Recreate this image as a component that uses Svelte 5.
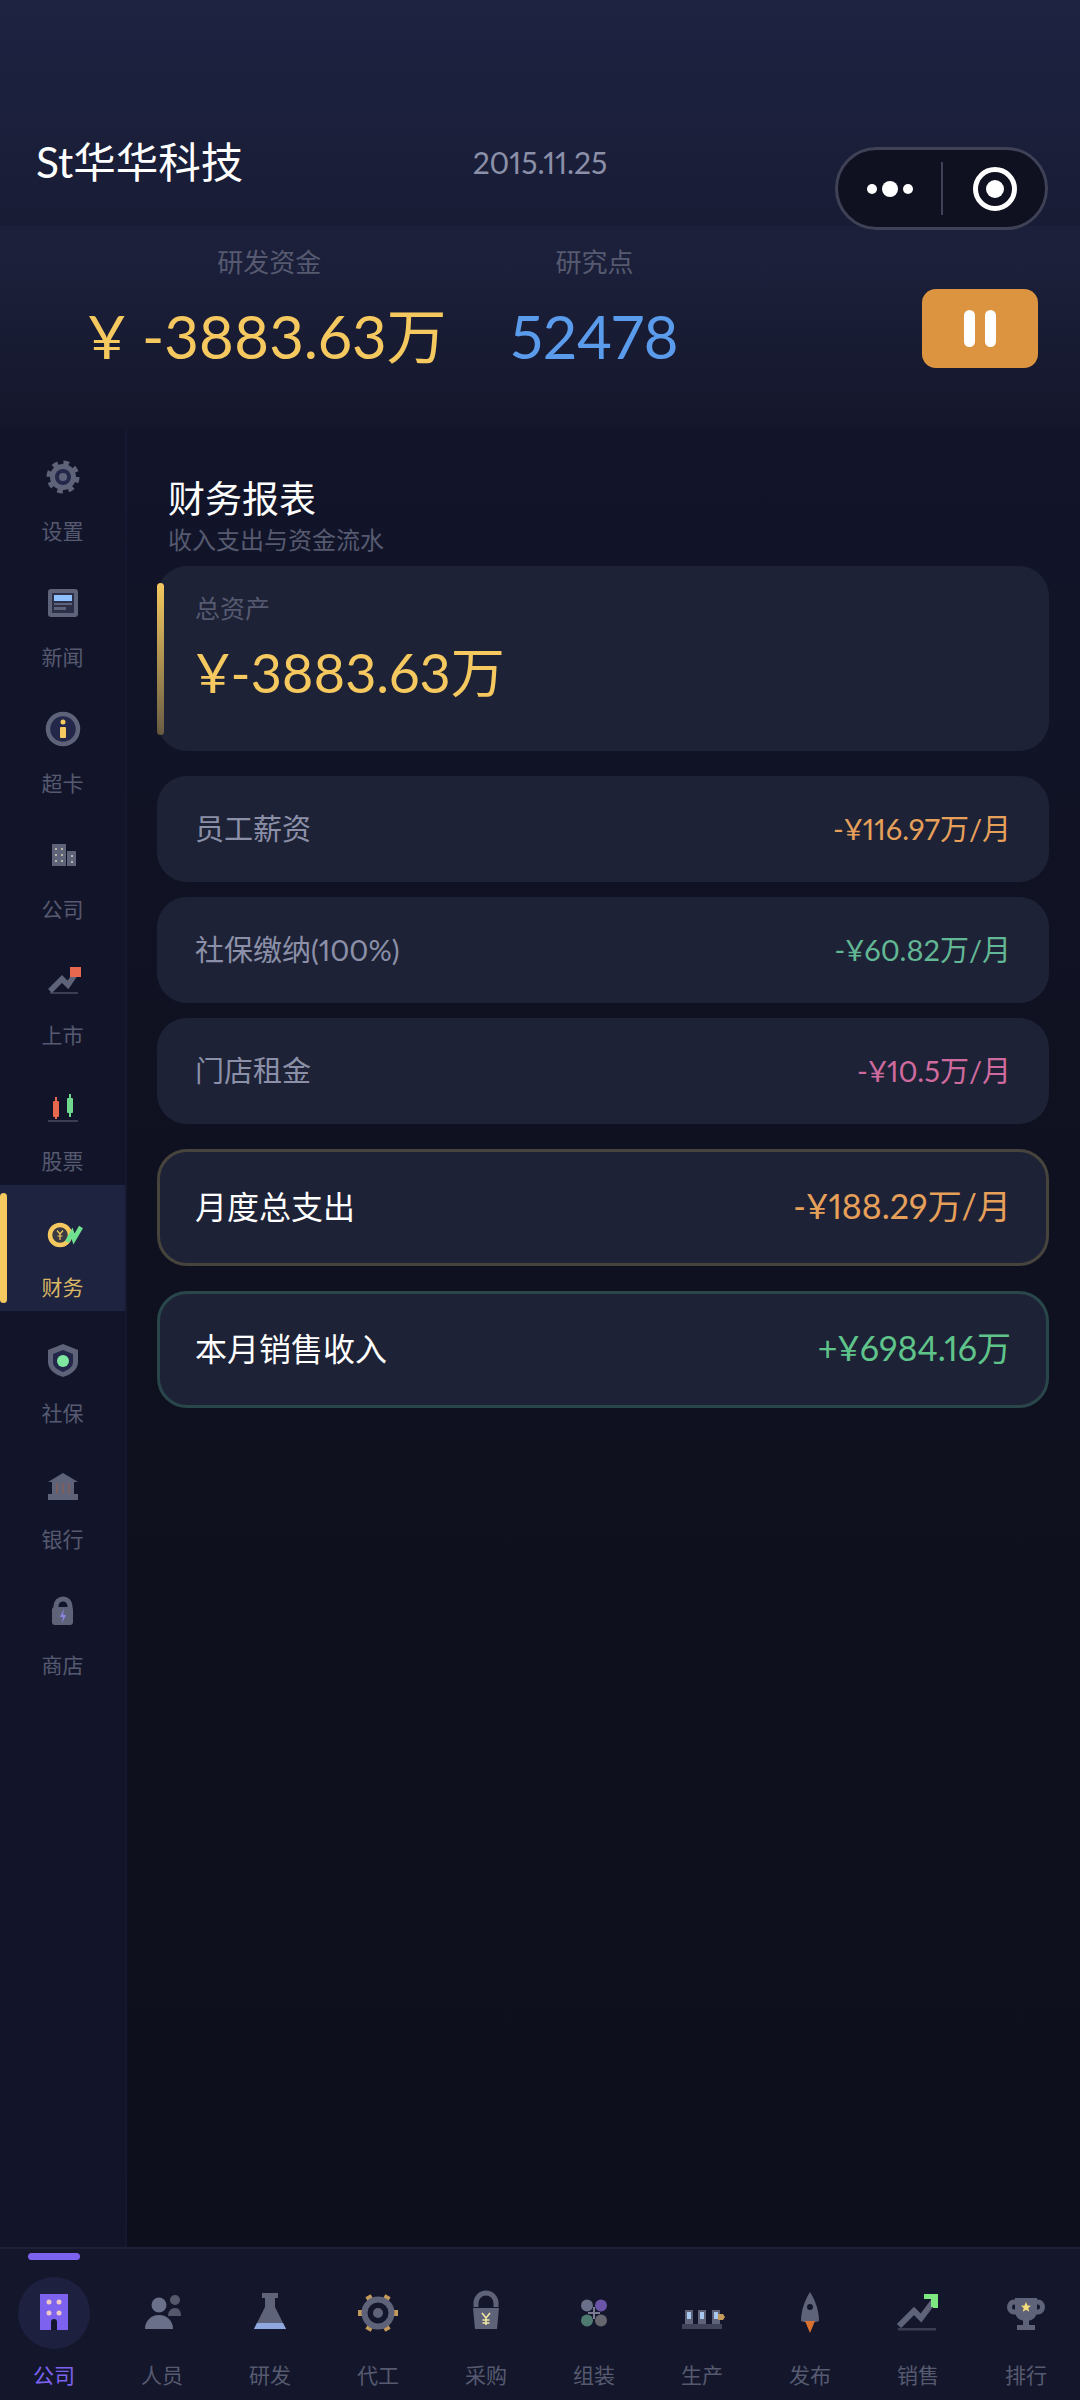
<script>
  const grey = '#5f6379'

  // icons drawn on a 48 box (sidebar) and a 60 box (bottom tabs)
  const sideIcons = {
    gear: `<circle cx="24" cy="24" r="14" fill="none" stroke="${grey}" stroke-width="5" stroke-dasharray="5.5 5.5"/><circle cx="24" cy="24" r="13" fill="${grey}"/><circle cx="24" cy="24" r="8" fill="#23274a"/><circle cx="24" cy="24" r="4" fill="${grey}"/>`,
    news: `<rect x="9" y="10" width="30" height="28" rx="3" fill="${grey}"/><rect x="13" y="14" width="22" height="20" fill="#2b3048"/><rect x="15" y="16" width="18" height="6" fill="#8fc0ff"/><rect x="15" y="24" width="18" height="2" fill="${grey}"/><rect x="15" y="28" width="12" height="3" fill="${grey}"/>`,
    info: `<circle cx="24" cy="24" r="15" fill="#23274a" stroke="${grey}" stroke-width="4.5"/><circle cx="24" cy="17" r="2.5" fill="#f5c95f"/><rect x="21" y="22" width="6" height="11" rx="1" fill="#f5c95f"/>`,
    building: `<rect x="13" y="13" width="14" height="22" fill="${grey}"/><rect x="28" y="20" width="9" height="15" fill="${grey}"/><g fill="#b5b5a8"><rect x="16" y="17" width="2" height="2"/><rect x="22" y="17" width="2" height="2"/><rect x="16" y="23" width="2" height="2"/><rect x="22" y="23" width="2" height="2"/><rect x="16" y="29" width="2" height="2"/><rect x="22" y="29" width="2" height="2"/><rect x="32" y="24" width="2" height="2"/><rect x="32" y="30" width="2" height="2"/></g>`,
    listing: `<rect x="11" y="35" width="28" height="2" fill="#3a3e55"/><path d="M11 34 23 22l6 6 8-12" fill="none" stroke="${grey}" stroke-width="5.5"/><rect x="31" y="10" width="11" height="10" fill="#e8674f"/>`,
    stock: `<rect x="9" y="37" width="30" height="2" fill="#3a3e55"/><rect x="16" y="14" width="2" height="22" fill="#e8674f"/><rect x="14" y="18" width="6" height="16" rx="1" fill="#e8674f"/><rect x="30" y="11" width="2" height="23" fill="#6fd88c"/><rect x="28" y="15" width="6" height="15" rx="1" fill="#6fd88c"/>`,
    finance: `<circle cx="21" cy="26" r="10" fill="#3a3a44" stroke="#f5c95f" stroke-width="4.5"/><path d="M18 21.500l3 3.500 3-3.500M21 25v6M18.500 27h5" fill="none" stroke="#f5c95f" stroke-width="1.200"/><path d="M28 33l5-9 2 6 7-12" fill="none" stroke="#6fe08f" stroke-width="4.500"/>`,
    shield: `<path d="M24 9 39 15v12c0 8-8 13-15 15-7-2-15-7-15-15V15z" fill="${grey}"/><path d="M24 15 34 19v8c0 5-5 8-10 10-5-2-10-5-10-10v-8z" fill="#23274a"/><circle cx="24" cy="26" r="6" fill="#7fe8a0"/>`,
    bank: `<path d="M24 12 39 21H9z" fill="${grey}"/><rect x="13" y="21" width="22" height="13" fill="${grey}"/><rect x="17" y="22" width="2" height="12" fill="#7a5f60"/><rect x="23" y="22" width="2" height="12" fill="#7a5f60"/><rect x="29" y="22" width="2" height="12" fill="#7a5f60"/><rect x="9" y="33" width="30" height="6" fill="${grey}"/>`,
    lock: `<path d="M17 22v-3a7 7 0 0 1 14 0v3" fill="none" stroke="${grey}" stroke-width="5"/><rect x="13" y="20" width="21" height="18" rx="3" fill="${grey}"/><path d="M25 22l-4 8h3l-1 6 4-8h-3z" fill="#8d86e8"/>`
  }

  const tabIcons = {
    company: `<rect x="16" y="11" width="28" height="36" fill="#7d62f0"/><g fill="#f0c8c8"><circle cx="25" cy="19" r="2.500"/><circle cx="35" cy="19" r="2.500"/><circle cx="25" cy="30" r="2.500"/><circle cx="35" cy="30" r="2.500"/></g><path d="M27 47v-8a3 3 0 0 1 6 0v8z" fill="#14162b"/>`,
    people: `<circle cx="43" cy="17" r="5" fill="#55576a"/><path d="M36 33c0-5 3-8 7-8s6 3 6 8z" fill="#55576a"/><circle cx="27" cy="22" r="7.500" fill="#6a6f8a"/><path d="M13 46c0-8 6-14 14-14s14 6 14 14z" fill="#6a6f8a"/>`,
    lab: `<rect x="22" y="10" width="16" height="5" fill="${grey}"/><path d="M25 15h10v9l11 22H14l11-22z" fill="${grey}"/><path d="M17 40h26l3 6H14z" fill="#8fa8e0"/>`,
    factory: `<g fill="#c49a5a"><rect x="27" y="10" width="6" height="7" transform="rotate(30 30 30)"/><rect x="27" y="10" width="6" height="7" transform="rotate(90 30 30)"/><rect x="27" y="10" width="6" height="7" transform="rotate(150 30 30)"/><rect x="27" y="10" width="6" height="7" transform="rotate(210 30 30)"/><rect x="27" y="10" width="6" height="7" transform="rotate(270 30 30)"/><rect x="27" y="10" width="6" height="7" transform="rotate(330 30 30)"/></g><circle cx="30" cy="30" r="13.500" fill="#14162b" stroke="${grey}" stroke-width="6"/><circle cx="30" cy="30" r="5" fill="${grey}"/>`,
    purchase: `<path d="M20 24v-4a10 10 0 0 1 20 0v4" fill="none" stroke="${grey}" stroke-width="5"/><path d="M17 25h26l-2 21H19z" fill="${grey}"/><path d="M26 30l4 5 4-5M30 35v7M26.500 37h7M26.500 40h7" fill="none" stroke="#f0e6a0" stroke-width="1.600"/>`,
    assemble: `<path d="M30 24v12M24 30h12" stroke="#7a7a90" stroke-width="2"/><circle cx="23" cy="22.500" r="6" fill="#6a6f8a"/><circle cx="37" cy="22.500" r="6" fill="#6a55a8"/><circle cx="23" cy="37.500" r="6" fill="#4f7a70"/><circle cx="37" cy="37.500" r="6" fill="#66666e"/>`,
    produce: `<rect x="10" y="41" width="40" height="5" fill="#3f4258"/><g fill="${grey}"><rect x="13" y="27" width="8" height="14"/><rect x="26" y="27" width="8" height="14"/><rect x="40" y="27" width="8" height="14"/></g><g fill="#a9c8f0"><rect x="15" y="29" width="4" height="7"/><rect x="28" y="29" width="4" height="7"/><rect x="42" y="29" width="4" height="7"/></g><path d="M46 31h5l2 3-2 3h-5z" fill="#c49a5a"/>`,
    launch: `<path d="M30 9c5 8 9 18 9 29l-3 1H24l-3-1c0-11 4-21 9-29z" fill="${grey}"/><circle cx="30" cy="24" r="3" fill="#14162b"/><path d="M25 38h10l-5 12z" fill="#d87030"/>`,
    sales: `<rect x="10" y="45" width="38" height="2.500" fill="#3a3e55"/><path d="M11 43 26 28l7 7 12-16" fill="none" stroke="${grey}" stroke-width="6"/><path d="M36 11h14v14h-5v-9h-9z" fill="#7de87f"/><rect x="43" y="13" width="6" height="11" fill="#7de87f"/>`,
    rank: `<path d="M20 19h-2a4.500 5 0 0 0 0 10h2M40 19h2a4.500 5 0 0 1 0 10h-2" fill="none" stroke="${grey}" stroke-width="5"/><path d="M19 15h22v12c0 7-4 11-11 11s-11-4-11-11z" fill="${grey}"/><rect x="27" y="36" width="6" height="8" fill="${grey}"/><rect x="21" y="42" width="18" height="5" fill="${grey}"/><path d="M30 19l1.500 3.500 3.500.3-2.700 2.300.9 3.600-3.200-1.900-3.200 1.900.9-3.600-2.700-2.300 3.500-.3z" fill="#f5dc7a"/>`
  }

  const sideItems = [
    { label: '设置', icon: 'gear' },
    { label: '新闻', icon: 'news' },
    { label: '超卡', icon: 'info' },
    { label: '公司', icon: 'building' },
    { label: '上市', icon: 'listing' },
    { label: '股票', icon: 'stock' },
    { label: '财务', icon: 'finance', active: true },
    { label: '社保', icon: 'shield' },
    { label: '银行', icon: 'bank' },
    { label: '商店', icon: 'lock' }
  ]

  const tabs = [
    { label: '公司', icon: 'company', active: true },
    { label: '人员', icon: 'people' },
    { label: '研发', icon: 'lab' },
    { label: '代工', icon: 'factory' },
    { label: '采购', icon: 'purchase' },
    { label: '组装', icon: 'assemble' },
    { label: '生产', icon: 'produce' },
    { label: '发布', icon: 'launch' },
    { label: '销售', icon: 'sales' },
    { label: '排行', icon: 'rank' }
  ]

  const rows = [
    { name: '员工薪资', value: '-¥116.97万/月', color: '#e6a05a' },
    { name: '社保缴纳(100%)', value: '-¥60.82万/月', color: '#62b795' },
    { name: '门店租金', value: '-¥10.5万/月', color: '#cf6a9f' }
  ]
</script>

<div class="page">
  <header class="header">
    <div class="top">
      <div class="title">St华华科技</div>
      <div class="date">2015.11.25</div>
      <div></div>
    </div>
    <div class="stats">
      <div class="stat">
        <div class="stat-label">研发资金</div>
        <div class="stat-value gold">¥ -3883.63万</div>
      </div>
      <div class="stat">
        <div class="stat-label">研究点</div>
        <div class="stat-value blue">52478</div>
      </div>
      <div class="pause"><span></span><span></span></div>
    </div>
    <div class="capsule">
      <div class="dots"><i></i><i class="mid"></i><i></i></div>
      <div class="sep"></div>
      <div class="ring"><i></i></div>
    </div>
  </header>

  <div class="body">
    <nav class="side">
      {#each sideItems as item}
        <div class="side-item" class:active={item.active}>
          <svg width="48" height="48" viewBox="0 0 48 48">{@html sideIcons[item.icon]}</svg>
          <div class="side-label">{item.label}</div>
        </div>
      {/each}
    </nav>

    <main class="main">
      <div class="heading">财务报表</div>
      <div class="sub">收入支出与资金流水</div>

      <div class="card total">
        <div class="total-label">总资产</div>
        <div class="total-value">¥-3883.63万</div>
      </div>

      <div class="list">
        {#each rows as r}
          <div class="card row">
            <span class="row-name">{r.name}</span>
            <span class="row-value" style="color: {r.color}">{r.value}</span>
          </div>
        {/each}
      </div>

      <div class="card row big expense">
        <span>月度总支出</span>
        <span class="big-value orange">-¥188.29万/月</span>
      </div>
      <div class="card row big income">
        <span>本月销售收入</span>
        <span class="big-value green">+¥6984.16万</span>
      </div>
    </main>
  </div>

  <footer class="tabs">
    {#each tabs as t}
      <div class="tab" class:active={t.active}>
        <div class="tab-icon">
          <svg width="60" height="60" viewBox="0 0 60 60">{@html tabIcons[t.icon]}</svg>
        </div>
        <div class="tab-label">{t.label}</div>
      </div>
    {/each}
  </footer>
</div>

<style>
  :global(body) {
    margin: 0;
    background: #0f1120;
  }

  .page {
    width: 1080px;
    height: 2400px;
    display: flex;
    flex-direction: column;
    position: relative;
    overflow: hidden;
    font-family: Lato, "Noto Sans CJK SC", sans-serif;
    font-variant-numeric: proportional-nums;
    background: #0f1120;
  }

  .header {
    height: 429px;
    flex: none;
    position: relative;
    background: linear-gradient(180deg, #1c203b 226px, #1b1f39 270px, #14172b 100%);
  }

  .top {
    height: 226px;
    box-sizing: border-box;
    padding: 136px 36px 0;
    display: grid;
    grid-template-columns: 1fr auto 1fr;
    background: linear-gradient(180deg, #1e2342 0%, #181c35 100%);
  }

  .title {
    font-size: 42.5px;
    line-height: 52px;
    color: #fff;
  }

  .date {
    font-size: 30px;
    line-height: 52px;
    color: #8b90a8;
  }

  .stats {
    display: flex;
    padding: 18px 42px 0 87px;
    gap: 64px;
    align-items: flex-start;
  }

  .stat {
    text-align: center;
  }

  .stat:first-child .stat-label {
    padding-left: 5px;
  }

  .stat-label {
    font-size: 26px;
    line-height: 36px;
    color: #565a70;
  }

  .stat-value {
    font-size: 60px;
    line-height: 76px;
    margin-top: 18px;
    white-space: nowrap;
  }

  .gold {
    color: #f5c95f;
  }

  .blue {
    color: #5b9bec;
  }

  .pause {
    margin: 45px 0 0 auto;
    width: 116px;
    height: 79px;
    border-radius: 14px;
    background: #dd9440;
    display: flex;
    justify-content: center;
    align-items: center;
    gap: 10px;
  }

  .pause span {
    width: 11px;
    height: 37px;
    border-radius: 6px;
    background: #fff;
  }

  .capsule {
    position: absolute;
    left: 835px;
    top: 147px;
    width: 213px;
    height: 83px;
    box-sizing: border-box;
    border: 3px solid #3f4256;
    border-radius: 42px;
    background: #0f1120;
    display: flex;
    align-items: center;
  }

  .dots {
    width: 103px;
    display: flex;
    justify-content: center;
    align-items: center;
    gap: 5px;
  }

  .dots i {
    width: 10px;
    height: 10px;
    border-radius: 50%;
    background: #fff;
  }

  .dots i.mid {
    width: 16px;
    height: 16px;
  }

  .sep {
    width: 2px;
    height: 53px;
    background: #3f4256;
  }

  .ring {
    width: 44px;
    height: 44px;
    margin-left: 30px;
    box-sizing: border-box;
    border: 5px solid #fff;
    border-radius: 50%;
    display: flex;
    align-items: center;
    justify-content: center;
  }

  .ring i {
    width: 18px;
    height: 18px;
    border-radius: 50%;
    background: #fff;
  }

  .body {
    flex: 1;
    display: flex;
    min-height: 0;
  }

  .side {
    width: 127px;
    flex: none;
    box-sizing: border-box;
    background: #12152a;
    border-right: 2px solid #151830;
  }

  .side-item {
    height: 126px;
    box-sizing: border-box;
    padding-top: 24px;
    position: relative;
    display: flex;
    flex-direction: column;
    align-items: center;
  }

  .side-item.active {
    background: #1e2340;
  }

  .side-item.active::before {
    content: "";
    position: absolute;
    left: 0;
    top: 8px;
    width: 7px;
    height: 110px;
    border-radius: 4px;
    background: #f5c95f;
  }

  .side-label {
    margin-top: 15px;
    font-size: 21px;
    line-height: 30px;
    color: #565a70;
  }

  .active .side-label {
    color: #d9b765;
  }

  .main {
    flex: 1;
    min-width: 0;
    padding: 46px 31px 0 30px;
    background: linear-gradient(180deg, #12152a 0%, #0f1120 40%, #0d0f1c 100%);
  }

  .heading {
    margin-left: 11px;
    font-size: 37px;
    line-height: 48px;
    color: #fff;
  }

  .sub {
    margin-left: 11px;
    font-size: 24px;
    line-height: 34px;
    color: #565a70;
  }

  .card {
    background: #1e2236;
    border-radius: 30px;
    box-sizing: border-box;
  }

  .total {
    height: 185px;
    margin-top: 9px;
    padding: 24px 38px 0;
    position: relative;
  }

  .total::before {
    content: "";
    position: absolute;
    left: 0;
    top: 17px;
    width: 7px;
    height: 152px;
    border-radius: 4px;
    background: linear-gradient(180deg, #f5c95f, rgba(245, 201, 95, 0.35));
  }

  .total-label {
    font-size: 25px;
    line-height: 36px;
    color: #565a70;
  }

  .total-value {
    margin-top: 12px;
    font-size: 54px;
    line-height: 70px;
    color: #f5c95f;
  }

  .list {
    margin-top: 25px;
    display: flex;
    flex-direction: column;
    gap: 15px;
  }

  .row {
    height: 106px;
    padding: 0 38px 4px;
    display: flex;
    align-items: center;
    justify-content: space-between;
  }

  .row-name {
    font-size: 29px;
    color: #8b90a8;
  }

  .row-value {
    font-size: 29px;
  }

  .big {
    height: 117px;
    margin-top: 25px;
    font-size: 32px;
    color: #fff;
    border: 3px solid;
    padding: 0 35px 6px;
  }

  .expense {
    border-color: #47433d;
  }

  .income {
    border-color: #29474a;
  }

  .big-value {
    font-size: 34px;
  }

  .orange {
    color: #e6a05a;
  }

  .green {
    color: #5fc48a;
  }

  .tabs {
    height: 153px;
    flex: none;
    display: flex;
    position: relative;
    box-sizing: border-box;
    border-top: 2px solid #1c2038;
    background: #14172b;
  }

  .tab {
    width: 108px;
    display: flex;
    flex-direction: column;
    align-items: center;
    padding-top: 28px;
    position: relative;
  }

  .tab.active::before {
    content: "";
    position: absolute;
    left: 28px;
    top: 4px;
    width: 52px;
    height: 7px;
    border-radius: 4px;
    background: #7d62f0;
  }

  .tab-icon {
    width: 72px;
    height: 72px;
    border-radius: 50%;
    display: flex;
    align-items: center;
    justify-content: center;
  }

  .active .tab-icon {
    background: #1e2040;
  }

  .tab-label {
    margin-top: 11px;
    font-size: 21px;
    line-height: 30px;
    color: #565a70;
  }

  .active .tab-label {
    color: #7d62f0;
  }
</style>
